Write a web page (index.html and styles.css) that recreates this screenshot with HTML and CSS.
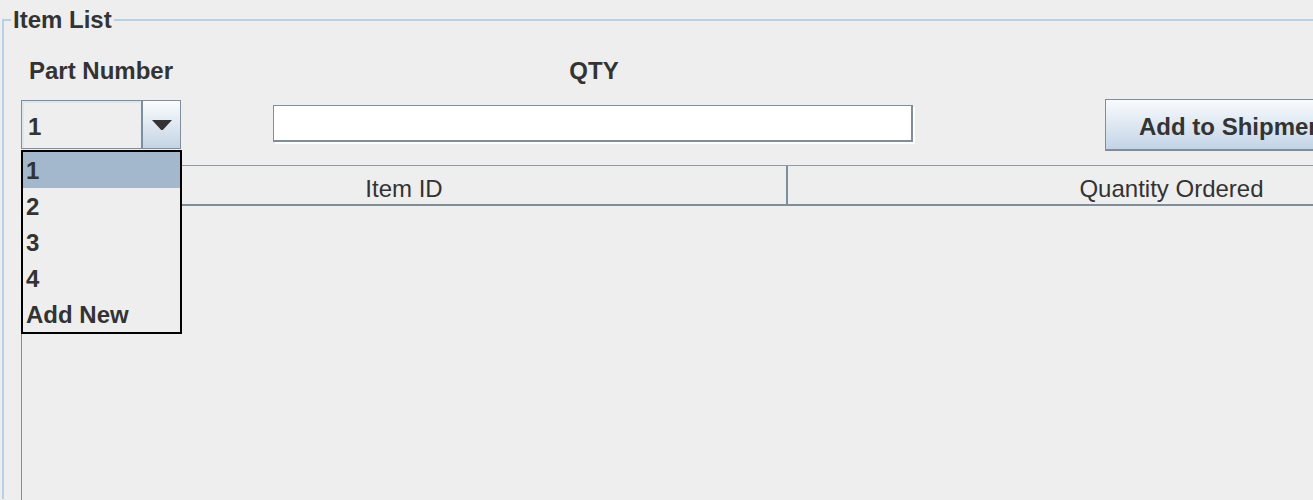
FILE: index.html
```html
<!DOCTYPE html>
<html>
<head>
<meta charset="utf-8">
<title>Item List</title>
<link rel="stylesheet" href="styles.css">
</head>
<body>
<div class="panel">
  <div class="panel-title">Item List</div>
  <div class="form">
    <div class="label">Part Number</div>
    <div class="label">QTY</div>
    <div class="label spacer"></div>
    <div class="combo">
      <div class="combo-value">1</div>
      <div class="combo-arrow"><svg width="20" height="10" viewBox="0 0 20 10"><path d="M0 0 L20 0 L10.8 10 L9.2 10 Z" fill="#333"/></svg></div>
      <ul class="popup">
        <li class="selected">1</li>
        <li>2</li>
        <li>3</li>
        <li>4</li>
        <li>Add New</li>
      </ul>
    </div>
    <div class="qty"></div>
    <div class="btn">Add to Shipment</div>
  </div>
  <div class="table">
    <div class="thead">
      <div class="th first">Item ID</div>
      <div class="th">Quantity Ordered</div>
    </div>
    <div class="tbody"></div>
  </div>
</div>
</body>
</html>
```
FILE: styles.css
```css
html, body {
  margin: 0;
  padding: 0;
}
body {
  width: 1313px;
  height: 500px;
  overflow: hidden;
  background: #eeeeee;
  color: #333333;
  font-family: "Liberation Sans", Arial, sans-serif;
}
.panel {
  position: relative;
  margin: 19px 0 0 2px;
  border-top: 2px solid #b8cfe5;
  border-left: 2px solid #b8cfe5;
  padding: 35px 0 0 17px;
  height: 480px;
  box-sizing: border-box;
}
.panel-title {
  position: absolute;
  top: -14px;
  left: 7px;
  padding: 0 2px;
  background: #eeeeee;
  font-weight: bold;
  font-size: 24px;
  line-height: 26px;
}
.form {
  display: grid;
  grid-template-columns: 160px 642px 260px;
  grid-template-rows: 30px 51px;
  column-gap: 92px;
  row-gap: 13px;
  align-items: center;
}
.label {
  font-weight: bold;
  font-size: 24px;
  line-height: 30px;
  text-align: center;
}
.combo {
  position: relative;
  display: flex;
  width: 160px;
  height: 49px;
  border: 1px solid #7f8e9c;
  box-sizing: border-box;
}
.combo-value {
  flex: 1;
  border-top: 2px solid #dce6f0;
  border-left: 2px solid #dce6f0;
  border-right: 1px solid #e6edf4;
  background: #eeeeee;
  padding-left: 4px;
  padding-top: 2px;
  display: flex;
  align-items: center;
  font-weight: bold;
  font-size: 24px;
}
.combo-arrow {
  width: 37px;
  border-left: 2px solid #7f8e9c;
  background: linear-gradient(#fbfcfe, #c4d4e4);
  display: flex;
  align-items: center;
  justify-content: center;
}
.popup {
  position: absolute;
  top: 49px;
  left: -1px;
  width: 161px;
  box-sizing: border-box;
  margin: 0;
  padding: 0;
  list-style: none;
  border: 2px solid #000000;
  background: #eeeeee;
  z-index: 2;
}
.popup li {
  height: 36px;
  line-height: 38px;
  padding-left: 3px;
  font-weight: bold;
  font-size: 24px;
  color: #333333;
}
.popup li.selected {
  background: #a3b8cc;
}
.qty {
  align-self: start;
  margin-top: 6px;
  width: 640px;
  height: 37px;
  box-sizing: border-box;
  background: #ffffff;
  border-top: 1px solid #7f8e9c;
  border-left: 1px solid #7f8e9c;
  border-right: 2px solid #7f8e9c;
  border-bottom: 2px solid #7f8e9c;
  box-shadow: 2px 2px 0 #ffffff;
}
.btn {
  margin-left: 98px;
  height: 52px;
  box-sizing: border-box;
  border: 1px solid #7f8e9c;
  border-bottom-width: 2px;
  background: linear-gradient(#f9fbfd, #c3d4e6);
  padding: 5px 33px 0;
  display: flex;
  align-items: center;
  font-weight: bold;
  font-size: 24px;
  white-space: nowrap;
  width: max-content;
}
.table {
  margin-top: 15px;
  width: 1540px;
  border-left: 1px solid #7f8e9c;
  border-top: 1px solid #8d9aa7;
  height: 340px;
}
.thead {
  display: flex;
  height: 40px;
  border-bottom: 2px solid #7f8e9c;
  box-sizing: border-box;
}
.th {
  width: 767px;
  text-align: center;
  font-size: 24px;
  line-height: 40px;
  padding-top: 3px;
  box-sizing: border-box;
  color: #333333;
}
.th.first {
  width: 766px;
  border-right: 2px solid #7f8e9c;
}
```
